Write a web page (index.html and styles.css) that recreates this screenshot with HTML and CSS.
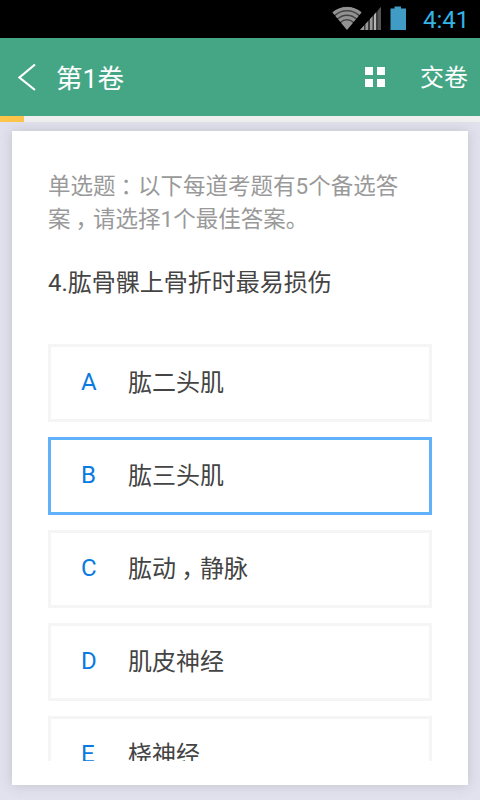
FILE: index.html
```html
<!DOCTYPE html>
<html lang="zh-CN">
<head>
<meta charset="utf-8">
<title>第1卷</title>
<link rel="stylesheet" href="styles.css">
</head>
<body>
<div class="status">
  <svg class="status-icons" width="76" height="26" viewBox="0 0 76 26">
    <defs><clipPath id="fan"><path d="M0 6Q15 -5 30 6L15 24Z"/></clipPath></defs>
    <g clip-path="url(#fan)">
      <path d="M0 6Q15 -5 30 6L15 24Z" fill="#444"/>
      <g fill="none" stroke="#929292" stroke-width="3">
        <circle cx="15" cy="23" r="20.500"/>
        <circle cx="15" cy="23" r="16"/>
        <circle cx="15" cy="23" r="11.500"/>
      </g>
      <circle cx="15" cy="23" r="8.500" fill="#929292"/>
    </g>
    <path d="M28 24L49 1V24Z" fill="#3c3c3c"/>
    <path d="M28 24L32 19.6V24ZM33.5 18L36 15.3V24H33.5ZM38 13L40.5 10.3V24H38Z" fill="#999"/>
    <path d="M42 8.7L44 6.5V24H42Z" fill="#b5b5b5"/>
    <path d="M46 4.3L49 1V24H46Z" fill="#555"/>
    <path d="M58.500 2.5H62.500V.5H69V2.5H74V24H58.500Z" fill="#409cc5"/>
  </svg>
  <span class="clock">4:41</span>
</div>
<header class="bar">
  <svg class="back" width="20" height="28" viewBox="0 0 20 28"><path d="M17 1.500L1.500 14.500L17 27" fill="none" stroke="#fff" stroke-width="2.200"/></svg>
  <h1 class="title">第1卷</h1>
  <svg class="grid" width="20" height="20" viewBox="0 0 20 20"><path d="M0 0H8V8H0ZM12 0H20V8H12ZM0 12H8V20H0ZM12 12H20V20H12Z" fill="#fff"/></svg>
  <span class="submit">交卷</span>
</header>
<div class="progress"><div class="progress-fill"></div></div>
<main class="card">
  <div class="scroll">
    <p class="hint">单选题<span class="mid">：</span>以下每道考题有5个备选答案<span class="mid">，</span>请选择1个最佳答案。</p>
    <p class="question">4.肱骨髁上骨折时最易损伤</p>
    <div class="option"><span class="key">A</span><span class="label">肱二头肌</span></div>
    <div class="option selected"><span class="key">B</span><span class="label">肱三头肌</span></div>
    <div class="option"><span class="key">C</span><span class="label">肱动<span class="mid">，</span>静脉</span></div>
    <div class="option"><span class="key">D</span><span class="label">肌皮神经</span></div>
    <div class="option"><span class="key">E</span><span class="label">桡神经</span></div>
  </div>
</main>
</body>
</html>
```
FILE: styles.css
```css
* { box-sizing: border-box; }
body {
  margin: 0;
  height: 800px;
  overflow: hidden;
  display: flex;
  flex-direction: column;
  background: #e2e2ef;
  font-family: Roboto, "Noto Sans CJK SC", sans-serif;
}
.status {
  height: 38px;
  flex: none;
  display: flex;
  align-items: center;
  justify-content: flex-end;
  padding-right: 11px;
  background: #000;
}
.status-icons { margin-right: 15px; }
.clock { font-size: 24px; line-height: 38px; padding-top: 2px; width: 46px; white-space: nowrap; color: #33b5e5; }
.bar {
  height: 78px;
  flex: none;
  display: flex;
  align-items: center;
  padding: 0 12px 0 18px;
  background: #44a684;
  color: #fff;
}
.title { margin: 3px 0 0 18px; font-size: 26.6px; line-height: 40px; font-weight: 400; }
.grid { margin-left: auto; }
.submit { margin: 2px 0 0 35px; font-size: 24px; line-height: 40px; }
.progress { height: 6px; flex: none; background: #f0f0f0; }
.progress-fill { width: 24px; height: 6px; background: #ffc54a; }
.card {
  height: 654px;
  flex: none;
  margin: 9px 12px 0;
  padding: 39px 36px 24px;
  background: #fff;
  box-shadow: 0 0 12px rgba(120, 120, 120, .3);
}
.scroll { height: 591px; overflow: hidden; }
.hint { margin: 0; font-size: 22.5px; line-height: 33px; color: #999; }
.question { margin: 28px 0 42px; font-size: 24px; line-height: 38px; color: #444; }
.mid { padding-left: .22em; margin-right: -.22em; }
.option {
  height: 78px;
  margin-bottom: 15px;
  padding: 0 30px 2px;
  display: flex;
  align-items: center;
  border: 3px solid #f5f5f5;
  font-size: 24px;
  line-height: 36px;
  color: #444;
}
.selected { border-color: #62b1fb; }
.key { width: 46px; color: #087ae0; }
.label { padding: 2px 0 0 1px; }
```
